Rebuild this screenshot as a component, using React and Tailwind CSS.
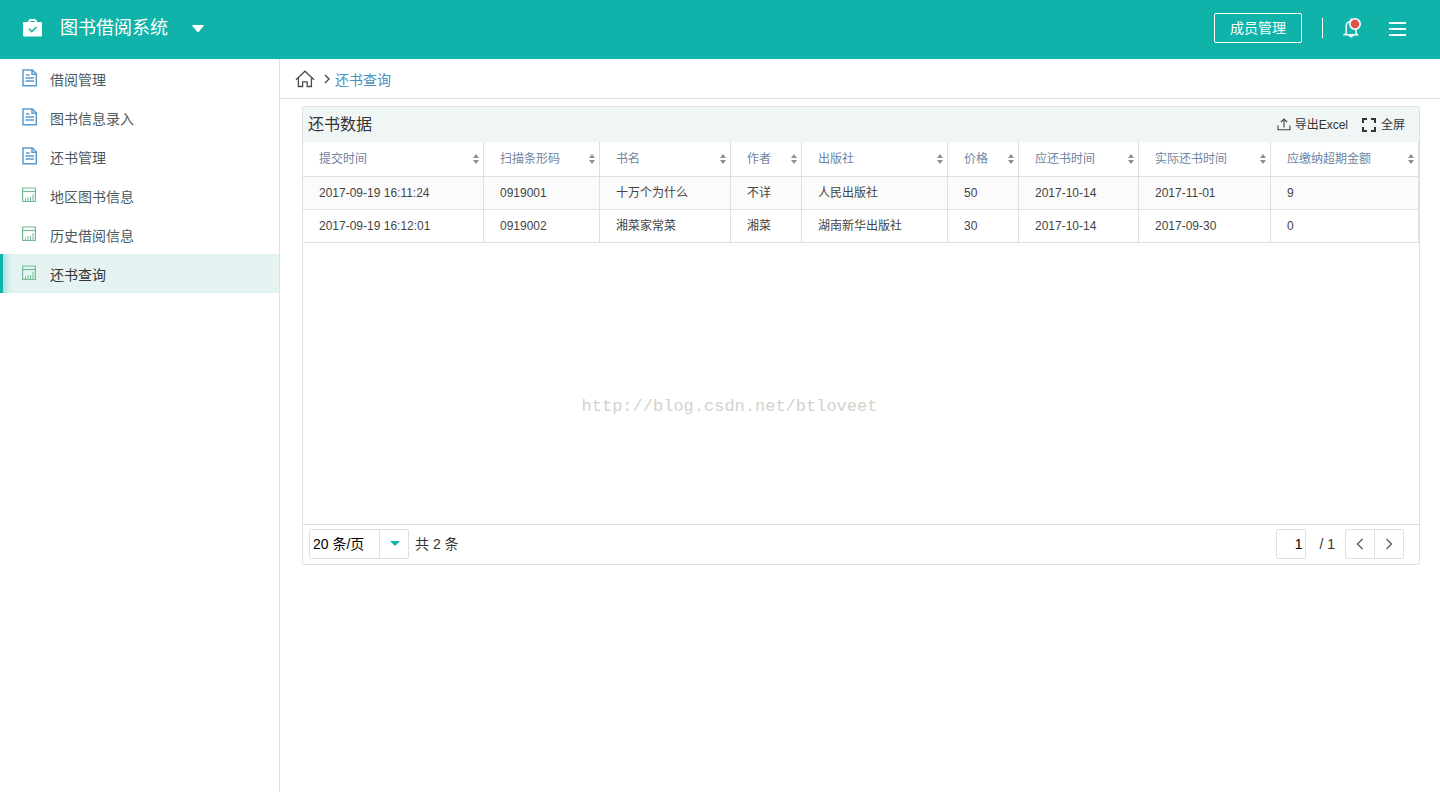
import clsx from 'clsx'

const MENU = [
  { label: '借阅管理', icon: 'form' },
  { label: '图书信息录入', icon: 'form' },
  { label: '还书管理', icon: 'form' },
  { label: '地区图书信息', icon: 'report' },
  { label: '历史借阅信息', icon: 'report' },
  { label: '还书查询', icon: 'report', active: true },
]

const COLUMNS = [
  { label: '提交时间', width: 181 },
  { label: '扫描条形码', width: 116 },
  { label: '书名', width: 131 },
  { label: '作者', width: 71 },
  { label: '出版社', width: 146 },
  { label: '价格', width: 71 },
  { label: '应还书时间', width: 120 },
  { label: '实际还书时间', width: 132 },
  { label: '应缴纳超期金额', width: 148 },
]

const ROWS = [
  ['2017-09-19 16:11:24', '0919001', '十万个为什么', '不详', '人民出版社', '50', '2017-10-14', '2017-11-01', '9'],
  ['2017-09-19 16:12:01', '0919002', '湘菜家常菜', '湘菜', '湖南新华出版社', '30', '2017-10-14', '2017-09-30', '0'],
]

function LogoIcon() {
  return (
    <svg width="20" height="18" viewBox="0 0 20 18" aria-hidden="true">
      <path d="M6.2 4V2.6a1.6 1.6 0 0 1 1.6-1.6h3.4a1.6 1.6 0 0 1 1.6 1.6V4" fill="none" stroke="#fff" strokeWidth="2" />
      <rect y="3" width="19" height="14.5" rx="1" fill="#fff" />
      <path d="M6 9.8l2.8 2.8L13.4 8" fill="none" stroke="#0fb3a9" strokeWidth="1.5" />
    </svg>
  )
}

function FormIcon() {
  return (
    <svg width="16" height="18" viewBox="0 0 16 18" fill="none" stroke="#5b9bcb" strokeWidth="1.5" aria-hidden="true">
      <path d="M1 1h9.5L14.3 5v11.8H1z" />
      <path d="M10 1v4.3h4.3" />
      <path d="M4 6h3.5M3.5 9h8.5M3.5 12h8.5" />
    </svg>
  )
}

function ReportIcon() {
  return (
    <svg width="14" height="16" viewBox="0 0 14 16" fill="none" stroke="#74bd94" aria-hidden="true">
      <path d="M.6 1h12.8v13.5H.6z" strokeWidth="1.2" />
      <path d="M.6 4.5h12.8" strokeWidth="1.2" />
      <path d="M3.5 14v-2.5M6 14v-4M8.5 14v-4M11 14V7" strokeWidth="1" />
    </svg>
  )
}

function BellIcon() {
  return (
    <svg width="20" height="22" viewBox="0 0 20 22" aria-hidden="true">
      <path
        d="M3.2 16.3V9.5A5 5 0 0 1 8 4.2a5 5 0 0 1 5 5.3v6.8l1.3 1.4H1.4zM8 4V1.4"
        fill="none"
        stroke="#fff"
        strokeWidth="1.4"
      />
      <path d="M5.2 18.3h5.6q-2.8 4.6-5.6 0z" fill="#fff" />
      <circle cx="12" cy="7" r="5.2" fill="#dd524d" stroke="#fff" strokeWidth="1.6" />
    </svg>
  )
}

function HomeIcon() {
  return (
    <svg width="20" height="18" viewBox="0 0 20 18" fill="none" stroke="#4c4c4c" strokeWidth="1.3" aria-hidden="true">
      <path d="M1 9.8L10 1.2l9 8.6" />
      <path d="M3.4 8.2v8.3h4.2v-4.6h4.6v4.6h4.2V8.2" />
    </svg>
  )
}

function ExportIcon() {
  return (
    <svg width="14" height="13" viewBox="0 0 14 13" fill="none" stroke="#444" strokeWidth="1.1" aria-hidden="true">
      <path d="M7 9.5V1M3.8 4.2L7 1l3.2 3.2" />
      <path d="M1 7.5v4.3h12V7.5" />
    </svg>
  )
}

function FullscreenIcon() {
  return (
    <svg width="14" height="14" viewBox="0 0 14 14" fill="none" stroke="#333" strokeWidth="2" aria-hidden="true">
      <path d="M5 1H1v4M9 1h4v4M5 13H1V9M9 13h4V9" />
    </svg>
  )
}

function SortIcon() {
  return (
    <svg width="6" height="10" viewBox="0 0 6 10" fill="#8f8f8f" aria-hidden="true">
      <path d="M0 4l3-4 3 4zM0 6h6l-3 4z" />
    </svg>
  )
}

function Chevron({ flip }) {
  return (
    <svg width="8" height="12" viewBox="0 0 8 12" fill="none" stroke="#666" strokeWidth="1.5" aria-hidden="true">
      <path d={flip ? 'M1.5 1l5 5-5 5' : 'M6.5 1l-5 5 5 5'} />
    </svg>
  )
}

function Header() {
  return (
    <header className="flex h-[59px] items-center justify-between bg-[#0fb3a9] pb-[3px] text-white">
      <div className="flex items-center pl-[23px]">
        <LogoIcon />
        <h1 className="ml-[17px] text-[18px] leading-6">图书借阅系统</h1>
        <button type="button" aria-label="切换应用" className="ml-6">
          <svg width="12" height="7" viewBox="0 0 12 7" fill="#fff" aria-hidden="true">
            <path d="M1 0h10q1.4 0 .6 1L7 6.4q-1 1-2 0L.4 1Q-.4 0 1 0z" />
          </svg>
        </button>
      </div>
      <div className="flex items-center pr-[34px]">
        <button type="button" className="mr-5 h-[30px] w-[88px] rounded-xs border border-white text-sm">
          成员管理
        </button>
        <span className="mr-5 h-5 w-px bg-white" />
        <button type="button" aria-label="通知" className="mr-[26px]">
          <BellIcon />
        </button>
        <button type="button" aria-label="菜单" className="flex w-[17px] flex-col gap-1 pt-[2px]">
          <span className="h-[2px] bg-white" />
          <span className="h-[2px] bg-white" />
          <span className="h-[2px] bg-white" />
        </button>
      </div>
    </header>
  )
}

function Sidebar() {
  return (
    <nav className="w-[280px] shrink-0 border-r border-[#e0e0e0]">
      <ul>
        {MENU.map((item) => (
          <li key={item.label}>
            <a
              href="#"
              className={clsx(
                'flex h-[39px] items-center border-l-[3px] pl-[19px] text-sm',
                item.active
                  ? 'border-[#0fb3a9] bg-[#e5f4f3] text-[#333] shadow-[inset_8px_0_8px_-6px_#8fd8d3]'
                  : 'border-transparent text-[#4a5a5f]'
              )}
            >
              <span className="w-7 pb-[2px]">{item.icon === 'form' ? <FormIcon /> : <ReportIcon />}</span>
              <span className="pt-[2px] leading-5">{item.label}</span>
            </a>
          </li>
        ))}
      </ul>
    </nav>
  )
}

function DataTable() {
  return (
    <table className="w-full table-fixed border-separate border-spacing-0 text-left text-xs">
      <colgroup>
        {COLUMNS.map((col) => (
          <col key={col.label} style={{ width: col.width }} />
        ))}
      </colgroup>
      <thead>
        <tr>
          {COLUMNS.map((col) => (
            <th key={col.label} className="h-[35px] border-r border-b border-[#e0e0e0] p-0 font-normal text-[#6f84a1]">
              <div className="flex items-center justify-between pr-1 pl-4">
                <span className="whitespace-nowrap">{col.label}</span>
                <SortIcon />
              </div>
            </th>
          ))}
        </tr>
      </thead>
      <tbody>
        {ROWS.map((row) => (
          <tr key={row[0]} className="odd:bg-[#fbfbfb]">
            {row.map((cell, i) => (
              <td key={i} className="h-[33px] border-r border-b border-[#e0e0e0] py-0 pr-0 pl-4 whitespace-nowrap text-[#444]">
                {cell}
              </td>
            ))}
          </tr>
        ))}
      </tbody>
    </table>
  )
}

function Pager() {
  return (
    <div className="flex h-10 items-center justify-between border-t border-[#e0e0e0] pr-[15px] pb-[2px] pl-[6px] text-sm text-[#333]">
      <div className="flex items-center">
        <label className="relative block">
          <select
            aria-label="每页条数"
            className="h-[30px] w-[100px] appearance-none rounded-xs border border-[#e0e0e0] bg-white pl-[3px] text-black"
          >
            <option>20 条/页</option>
          </select>
          <span className="pointer-events-none absolute inset-y-0 right-0 flex w-[30px] items-center justify-center border-l border-[#e0e0e0]">
            <svg width="10" height="5" viewBox="0 0 10 5" fill="#0fb3a9" aria-hidden="true">
              <path d="M0 0h10L5 5z" />
            </svg>
          </span>
        </label>
        <span className="ml-[6px]">共 2 条</span>
      </div>
      <div className="flex items-center">
        <input
          aria-label="页码"
          defaultValue="1"
          className="h-[30px] w-[30px] rounded-xs border border-[#e0e0e0] pr-[3px] text-right text-black"
        />
        <span className="mr-[10px] ml-[13px]">/ 1</span>
        <button
          type="button"
          aria-label="上一页"
          className="flex h-[30px] w-[30px] items-center justify-center rounded-l-xs border border-[#e0e0e0]"
        >
          <Chevron />
        </button>
        <button
          type="button"
          aria-label="下一页"
          className="flex h-[30px] w-[29px] items-center justify-center rounded-r-xs border border-l-0 border-[#e0e0e0]"
        >
          <Chevron flip />
        </button>
      </div>
    </div>
  )
}

export default function App() {
  return (
    <div className="flex min-h-screen flex-col bg-white font-['Liberation_Sans','Noto_Sans_CJK_SC',sans-serif]">
      <Header />
      <div className="flex flex-1">
        <Sidebar />
        <main className="min-w-0 flex-1">
          <div className="flex h-10 items-center border-b border-[#e0e0e0] pl-[15px] text-sm">
            <a href="#" aria-label="首页">
              <HomeIcon />
            </a>
            <svg className="mr-1 ml-2" width="8" height="10" viewBox="0 0 8 10" fill="none" stroke="#4c4c4c" strokeWidth="1.4" aria-hidden="true">
              <path d="M2 1l4 4-4 4" />
            </svg>
            <a href="#" className="pt-[2px] text-[#4a90bd]">
              还书查询
            </a>
          </div>
          <section className="mt-[7px] mr-5 ml-[22px] overflow-hidden rounded-xs border border-[#e0e0e0]">
            <div className="flex h-[35px] items-center justify-between bg-[#f0f6f6] pr-[14px] pl-[5px]">
              <h2 className="text-base text-[#333]">还书数据</h2>
              <div className="flex items-center gap-[14px] text-xs text-[#333]">
                <button type="button" className="flex items-center gap-1">
                  <ExportIcon />
                  导出Excel
                </button>
                <button type="button" className="flex items-center gap-[5px]">
                  <FullscreenIcon />
                  全屏
                </button>
              </div>
            </div>
            <div className="relative min-h-[382px]">
              <DataTable />
              <span className="pointer-events-none absolute inset-x-0 top-[253px] pr-[263px] text-center font-['Liberation_Mono',monospace] text-[17px] leading-6 text-[#d3d3cd]">
                http://blog.csdn.net/btloveet
              </span>
            </div>
            <Pager />
          </section>
        </main>
      </div>
    </div>
  )
}
